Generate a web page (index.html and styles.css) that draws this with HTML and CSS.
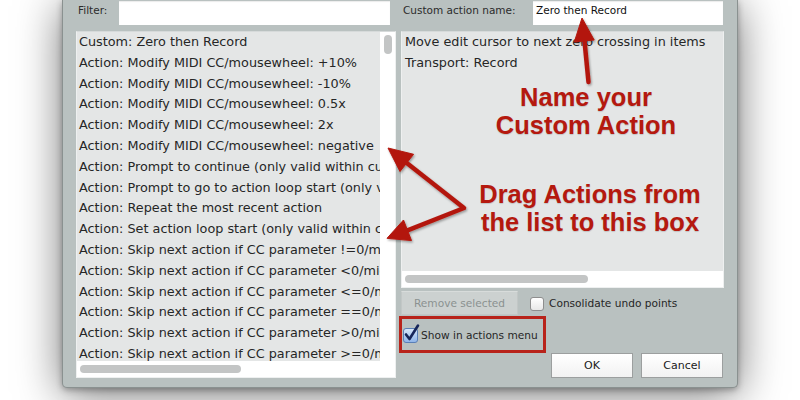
FILE: index.html
```html
<!DOCTYPE html>
<html>
<head>
<meta charset="utf-8">
<link rel="stylesheet" href="styles.css">
</head>
<body>
<div class="dialog">
  <div class="col col-left">
    <div class="field-row">
      <span class="label label-filter">Filter:</span>
      <div class="input input-filter"></div>
    </div>
    <div class="list list-left">
      <div class="list-view">
        <div class="items">
          <div class="item">Custom: Zero then Record</div>
          <div class="item">Action: Modify MIDI CC/mousewheel: +10%</div>
          <div class="item">Action: Modify MIDI CC/mousewheel: -10%</div>
          <div class="item">Action: Modify MIDI CC/mousewheel: 0.5x</div>
          <div class="item">Action: Modify MIDI CC/mousewheel: 2x</div>
          <div class="item">Action: Modify MIDI CC/mousewheel: negative</div>
          <div class="item">Action: Prompt to continue (only valid within custom actions)</div>
          <div class="item">Action: Prompt to go to action loop start (only valid within custom actions)</div>
          <div class="item">Action: Repeat the most recent action</div>
          <div class="item">Action: Set action loop start (only valid within custom actions)</div>
          <div class="item">Action: Skip next action if CC parameter !=0/mid</div>
          <div class="item">Action: Skip next action if CC parameter &lt;0/mid</div>
          <div class="item">Action: Skip next action if CC parameter &lt;=0/mid</div>
          <div class="item">Action: Skip next action if CC parameter ==0/mid</div>
          <div class="item">Action: Skip next action if CC parameter &gt;0/mid</div>
          <div class="item">Action: Skip next action if CC parameter &gt;=0/mid</div>
        </div>
        <div class="vtrack"><div class="vthumb"></div></div>
      </div>
      <div class="htrack"><div class="hthumb hthumb-left"></div></div>
    </div>
  </div>

  <div class="col col-right">
    <div class="field-row">
      <span class="label label-name">Custom action name:</span>
      <div class="input input-name">Zero then Record</div>
    </div>
    <div class="list list-right">
      <div class="items items-right">
        <div class="item">Move edit cursor to next zero crossing in items</div>
        <div class="item">Transport: Record</div>
      </div>
      <div class="htrack"><div class="hthumb hthumb-right"></div></div>
    </div>
    <div class="opts-row">
      <div class="btn btn-disabled">Remove selected</div>
      <span class="checkbox"></span>
      <span class="opt-label">Consolidate undo points</span>
    </div>
    <div class="show-row">
      <div class="redbox">
        <span class="checkbox checked">
          <svg class="check" width="17" height="19" viewBox="0 0 17 19"><path d="M3 11.5 L6.5 16 L15 2.5" fill="none" stroke="#17265a" stroke-width="2.6" stroke-linecap="round" stroke-linejoin="round"/></svg>
        </span>
        <span class="opt-label">Show in actions menu</span>
      </div>
    </div>
    <div class="btn-row">
      <div class="btn btn-main">OK</div>
      <div class="btn btn-main">Cancel</div>
    </div>
  </div>

  <div class="note note-name">Name your<br>Custom Action</div>
  <div class="note note-drag">Drag Actions from<br>the list to this box</div>

  <svg class="arrows" width="676" height="400" viewBox="62 0 676 400">
    <defs>
      <filter id="sh" x="-20%" y="-20%" width="140%" height="140%">
        <feDropShadow dx="1" dy="1.5" stdDeviation="1.2" flood-color="#000" flood-opacity="0.35"/>
      </filter>
    </defs>
    <g filter="url(#sh)" fill="#b3180e" stroke="#b3180e">
      <line x1="587.5" y1="82" x2="583.3" y2="39" stroke-width="4.5" stroke-linecap="round"/>
      <polygon points="581,18 593.2,40 573.3,42" stroke-width="1" stroke-linejoin="round"/>
      <path d="M405.8 162.9 L463 208 L406.5 230.3" fill="none" stroke-width="4.5" stroke-linejoin="round" stroke-linecap="round"/>
      <polygon points="387,148 412.6,154.3 399,171.5" stroke-width="1" stroke-linejoin="round"/>
      <polygon points="386,238.3 410.5,240.6 402.5,220" stroke-width="1" stroke-linejoin="round"/>
    </g>
  </svg>
</div>
</body>
</html>
```

FILE: styles.css
```css
html, body {
  margin: 0;
  padding: 0;
  background: #ffffff;
  width: 800px;
  height: 400px;
  overflow: hidden;
}

.dialog {
  position: relative;
  box-sizing: border-box;
  margin-left: 62px;
  width: 676px;
  height: 388px;
  padding: 1px 13px 0 13px;
  background: #b9c1c0;
  border: 1px solid #8a9190;
  border-top: none;
  border-radius: 0 0 5px 5px;
  box-shadow: 0 6px 45px rgba(0, 0, 0, 0.55), 0 2px 6px rgba(0, 0, 0, 0.3);
  display: flex;
  gap: 5px;
  font-family: "DejaVu Sans", sans-serif;
  color: #262626;
}

.col {
  display: flex;
  flex-direction: column;
}

.col-left {
  width: 320px;
}

.col-right {
  width: 324px;
}

.field-row {
  display: flex;
  height: 24px;
}

.label {
  font-size: 10.5px;
  color: #2c2c2c;
  padding-top: 3px;
  padding-left: 2px;
  box-sizing: border-box;
}

.label-filter {
  width: 43px;
}

.label-name {
  width: 132px;
}

.input {
  background: #ffffff;
  box-sizing: border-box;
  height: 24px;
  font-size: 10.5px;
  color: #111;
  padding: 3px 0 0 3px;
  box-shadow: inset 0 1px 1px rgba(0,0,0,0.08);
}

.input-filter {
  width: 271px;
}

.input-name {
  width: 190px;
}

.list {
  margin-top: 6px;
  box-sizing: border-box;
  border: 1px solid #eef0f0;
  border-top-color: #d6dada;
  background: #ffffff;
  display: flex;
  flex-direction: column;
}

.list-left {
  height: 347px;
}

.list-right {
  height: 257px;
  background: #e4e6e6;
}

.list-view {
  display: flex;
  flex: 1;
  min-height: 0;
}

.items {
  flex: 1;
  background: #e4e6e6;
  overflow: hidden;
  padding-left: 2px;
  min-width: 0;
}

.items-right {
  padding-left: 3px;
}

.item {
  font-size: 12.8px;
  line-height: 20.8px;
  height: 20.8px;
  white-space: nowrap;
  color: #262626;
}

.vtrack {
  width: 15px;
  background: #ffffff;
  position: relative;
  display: flex;
  justify-content: center;
  padding-top: 3px;
  box-sizing: border-box;
}

.vthumb {
  width: 8px;
  height: 19px;
  border-radius: 4px;
  background: #c3c5c5;
}

.htrack {
  height: 16px;
  background: #ffffff;
  display: flex;
  align-items: center;
  padding-left: 3px;
  flex-shrink: 0;
}

.list-right .htrack {
  margin-top: auto;
}

.hthumb {
  height: 8px;
  border-radius: 4px;
  background: #c3c5c5;
}

.hthumb-left {
  width: 161px;
}

.hthumb-right {
  width: 183px;
}

.opts-row {
  display: flex;
  align-items: center;
  margin-top: 3px;
  height: 24px;
}

.btn {
  box-sizing: border-box;
  height: 24px;
  display: flex;
  align-items: center;
  justify-content: center;
  font-size: 10.6px;
}

.btn-disabled {
  width: 117px;
  background: #ccd1d0;
  border: 1px solid #c2c7c6;
  border-top-color: #d8dcdb;
  color: #8b9190;
}

.checkbox {
  position: relative;
  box-sizing: border-box;
  width: 14px;
  height: 14px;
  border: 1px solid #8e8e8e;
  border-radius: 3px;
  background: linear-gradient(#ffffff, #e8e8e8);
  flex-shrink: 0;
}

.opts-row .checkbox {
  margin-left: 12px;
  margin-top: 2px;
}

.opt-label {
  font-size: 10.6px;
  color: #262626;
  margin-left: 5px;
}

.show-row {
  display: flex;
  margin-top: 1px;
}

.redbox {
  margin-left: -2px;
  box-sizing: border-box;
  width: 147px;
  height: 37px;
  border: 3px solid #b8231a;
  display: flex;
  align-items: center;
  padding-left: 1px;
  padding-top: 1px;
}

.checkbox.checked {
  width: 15px;
  height: 15px;
  background: linear-gradient(#d6e6fa, #8fb5e8);
  border-color: #5a7fb6;
}

.check {
  position: absolute;
  left: -1px;
  top: -6px;
}

.redbox .opt-label {
  margin-left: 3px;
}

.btn-row {
  display: flex;
  justify-content: flex-end;
  gap: 8px;
  padding-right: 1px;
}

.btn-main {
  width: 82px;
  height: 25px;
  background: linear-gradient(#ffffff, #f2f2f2);
  border: 1px solid #9c9f9f;
  color: #1a1a1a;
  font-size: 11px;
}

.note {
  position: absolute;
  font-family: "Liberation Sans", Arial, sans-serif;
  font-weight: bold;
  font-size: 25.5px;
  line-height: 28px;
  color: #b5190f;
  text-align: center;
  white-space: nowrap;
  text-shadow: 0 1px 1px rgba(0,0,0,0.15);
}

.note-name {
  left: 423px;
  top: 83px;
  width: 200px;
}

.note-drag {
  left: 397px;
  top: 180px;
  width: 260px;
}

.arrows {
  position: absolute;
  left: 0;
  top: 0;
  overflow: visible;
  pointer-events: none;
}
```
